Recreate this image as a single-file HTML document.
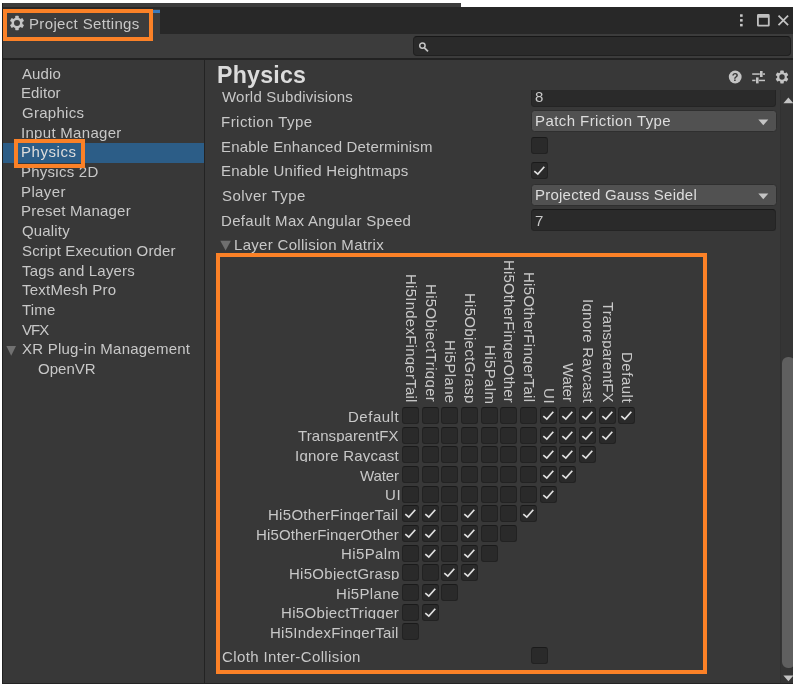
<!DOCTYPE html>
<html><head><meta charset="utf-8"><title>Project Settings</title><style>
html,body{margin:0;padding:0;background:#fff;}
html{overflow:hidden;}
body{width:793px;height:685px;position:relative;overflow:hidden;font-family:"Liberation Sans",sans-serif;}
.r{position:absolute;box-sizing:content-box;}
.t{position:absolute;white-space:nowrap;will-change:transform;}
.cb{position:absolute;background:#2a2a2a;border:1px solid #222;border-top-color:#1a1a1a;border-radius:3px;}
.clip{will-change:transform;position:absolute;white-space:nowrap;overflow:hidden;height:14px;line-height:16.6px;font-size:15.0px;letter-spacing:0.28px;color:#c8c8c8;}
svg{overflow:visible;}
</style></head><body>
<div class="r" style="left:2.00px;top:3.00px;width:791.00px;height:681.00px;background:#383838;"></div>
<div class="r" style="left:461.00px;top:3.00px;width:332.00px;height:4.00px;background:#ffffff;"></div>
<div class="r" style="left:3.00px;top:7.00px;width:790.00px;height:27.00px;background:#282828;"></div>
<div class="r" style="left:2.00px;top:3.00px;width:459.00px;height:4.40px;background:#3c3c3c;"></div>
<div class="r" style="left:3.00px;top:9.00px;width:156.50px;height:25.00px;background:#3c3c3c;"></div>
<div class="r" style="left:3.00px;top:10.00px;width:156.50px;height:2.60px;background:#3a79bb;"></div>
<div class="r" style="left:3.00px;top:34.00px;width:790.00px;height:24.20px;background:#3c3c3c;"></div>
<div class="r" style="left:3.00px;top:58.20px;width:790.00px;height:1.60px;background:#222222;"></div>
<div class="r" style="left:413.3px;top:36.3px;width:375.7px;height:17.4px;background:#2a2a2a;border:1px solid #202020;border-top-color:#171717;border-radius:4px"></div>
<svg class="r" style="left:418px;top:41px" width="12" height="12" viewBox="0 0 12 12"><circle cx="4.4" cy="4.6" r="2.7" fill="none" stroke="#c4c4c4" stroke-width="1.5"/><path d="M6.4 6.8 L10 10.4" stroke="#c4c4c4" stroke-width="1.7"/></svg>
<svg class="r" style="left:8.50px;top:14.50px" width="16" height="16" viewBox="-8 -8 16 16"><g fill="#c4c4c4"><rect x="-1.75" y="-7.2" width="3.5" height="14.4" rx="0.6" transform="rotate(0)"/><rect x="-1.75" y="-7.2" width="3.5" height="14.4" rx="0.6" transform="rotate(60)"/><rect x="-1.75" y="-7.2" width="3.5" height="14.4" rx="0.6" transform="rotate(120)"/><circle r="5.47"/></g><circle r="3.02" fill="#3c3c3c"/></svg>
<div class="t" style="left:28.77px;top:16.00px;font-size:15.0px;line-height:16.755px;color:#c8c8c8;letter-spacing:0.348px;">Project Settings</div>
<div class="r" style="left:3.20px;top:8.70px;width:142.10px;height:24.10px;border:4px solid #fb8127;"></div>
<svg class="r" style="left:739px;top:13px" width="5" height="15" viewBox="0 0 5 15"><g fill="#c8c8c8"><rect x="1.05" y="1.30" width="2.6" height="2.5"/><rect x="1.05" y="6.10" width="2.6" height="2.5"/><rect x="1.05" y="10.90" width="2.6" height="2.5"/></g></svg>
<svg class="r" style="left:757px;top:13.9px" width="13" height="13" viewBox="0 0 13 13"><path fill-rule="evenodd" fill="#c0c0c0" d="M1.4 0 H11.3 A1.4 1.4 0 0 1 12.7 1.4 V11.2 A1.4 1.4 0 0 1 11.3 12.6 H1.4 A1.4 1.4 0 0 1 0 11.2 V1.4 A1.4 1.4 0 0 1 1.4 0 Z M1.8 3.8 V10.8 H10.9 V3.8 Z"/></svg>
<svg class="r" style="left:777px;top:14px" width="13" height="13" viewBox="0 0 13 13"><path d="M1.5 1.6 L11.1 11.2 M11.1 1.6 L1.5 11.2" stroke="#c4c4c4" stroke-width="1.7"/></svg>
<div class="r" style="left:2.00px;top:3.00px;width:1.00px;height:681.00px;background:#202020;"></div>
<div class="r" style="left:2.00px;top:683.00px;width:791.00px;height:1.00px;background:#242424;"></div>
<div class="r" style="left:204.00px;top:59.80px;width:1.00px;height:623.20px;background:#232323;"></div>
<div class="r" style="left:3.00px;top:143.30px;width:201.00px;height:19.40px;background:#2c5d87;"></div>
<div class="t" style="left:22.47px;top:66.00px;font-size:15.0px;line-height:16.755px;color:#c8c8c8;letter-spacing:0.099px;">Audio</div>
<div class="t" style="left:21.27px;top:85.00px;font-size:15.0px;line-height:16.755px;color:#c8c8c8;letter-spacing:0.079px;">Editor</div>
<div class="t" style="left:21.75px;top:105.00px;font-size:15.0px;line-height:16.755px;color:#c8c8c8;letter-spacing:0.268px;">Graphics</div>
<div class="t" style="left:21.12px;top:125.00px;font-size:15.0px;line-height:16.755px;color:#c8c8c8;letter-spacing:0.3px;">Input Manager</div>
<div class="t" style="left:21.27px;top:144.00px;font-size:15.0px;line-height:16.755px;color:#dcdcdc;letter-spacing:0.565px;">Physics</div>
<div class="t" style="left:21.27px;top:164.00px;font-size:15.0px;line-height:16.755px;color:#c8c8c8;letter-spacing:0.247px;">Physics 2D</div>
<div class="t" style="left:21.27px;top:184.00px;font-size:15.0px;line-height:16.755px;color:#c8c8c8;letter-spacing:0.392px;">Player</div>
<div class="t" style="left:21.27px;top:203.00px;font-size:15.0px;line-height:16.755px;color:#c8c8c8;letter-spacing:0.228px;">Preset Manager</div>
<div class="t" style="left:21.79px;top:223.00px;font-size:15.0px;line-height:16.755px;color:#c8c8c8;letter-spacing:0.159px;">Quality</div>
<div class="t" style="left:21.82px;top:243.00px;font-size:15.0px;line-height:16.755px;color:#c8c8c8;letter-spacing:0.121px;">Script Execution Order</div>
<div class="t" style="left:22.16px;top:263.00px;font-size:15.0px;line-height:16.755px;color:#c8c8c8;letter-spacing:0.196px;">Tags and Layers</div>
<div class="t" style="left:22.16px;top:282.00px;font-size:15.0px;line-height:16.755px;color:#c8c8c8;letter-spacing:0.219px;">TextMesh Pro</div>
<div class="t" style="left:22.16px;top:302.00px;font-size:15.0px;line-height:16.755px;color:#c8c8c8;letter-spacing:0.157px;">Time</div>
<div class="t" style="left:22.43px;top:322.00px;font-size:15.0px;line-height:16.755px;color:#c8c8c8;letter-spacing:-0.946px;">VFX</div>
<div class="t" style="left:22.16px;top:341.00px;font-size:15.0px;line-height:16.755px;color:#c8c8c8;letter-spacing:0.226px;">XR Plug-in Management</div>
<div class="t" style="left:38.19px;top:361.00px;font-size:15.0px;line-height:16.755px;color:#c8c8c8;letter-spacing:0.015px;">OpenVR</div>
<svg class="r" style="left:6px;top:345px" width="11" height="12" viewBox="0 0 11 12"><path d="M0.4 1 L10 1 L5.2 10.8 Z" fill="#717171"/></svg>
<div class="r" style="left:14.30px;top:138.50px;width:63.20px;height:21.10px;border:4px solid #fb8127;"></div>
<div class="t" style="left:222.23px;top:89.00px;font-size:15.0px;line-height:16.755px;color:#c8c8c8;letter-spacing:0.209px;">World Subdivisions</div>
<div class="t" style="left:221.07px;top:114.00px;font-size:15.0px;line-height:16.755px;color:#c8c8c8;letter-spacing:0.467px;">Friction Type</div>
<div class="t" style="left:221.07px;top:139.00px;font-size:15.0px;line-height:16.755px;color:#c8c8c8;letter-spacing:0.182px;">Enable Enhanced Determinism</div>
<div class="t" style="left:221.07px;top:163.00px;font-size:15.0px;line-height:16.755px;color:#c8c8c8;letter-spacing:0.233px;">Enable Unified Heightmaps</div>
<div class="t" style="left:221.62px;top:188.00px;font-size:15.0px;line-height:16.755px;color:#c8c8c8;letter-spacing:0.452px;">Solver Type</div>
<div class="t" style="left:221.07px;top:213.00px;font-size:15.0px;line-height:16.755px;color:#c8c8c8;letter-spacing:0.302px;">Default Max Angular Speed</div>
<div class="r" style="left:531px;top:85px;width:243.2px;height:20.00px;background:#2a2a2a;border:1px solid #242424;border-top-color:#191919;border-radius:3.5px"></div>
<div class="t" style="left:534.75px;top:89.00px;font-size:15.0px;line-height:16.755px;color:#c8c8c8;letter-spacing:0px;">8</div>
<div class="r" style="left:531px;top:110px;width:243.6px;height:20.20px;background:#515151;border:1px solid #2f2f2f;border-radius:3.5px"></div>
<div class="t" style="left:534.77px;top:113.00px;font-size:15.0px;line-height:16.755px;color:#dddddd;letter-spacing:0.421px;">Patch Friction Type</div>
<svg class="r" style="left:757.8px;top:118.50px" width="11" height="7" viewBox="0 0 11 7"><path d="M0.3 0.4 L10.3 0.4 L5.3 6.2 Z" fill="#c4c4c4"/></svg>
<div class="cb" style="left:531.00px;top:137.20px;width:15px;height:15px"></div>
<div class="cb" style="left:531.00px;top:161.60px;width:15px;height:15px"></div>
<svg class="r" style="left:531.00px;top:161.60px" width="17" height="17" viewBox="0 0 17 17"><path d="M3.3 9.2 L6.8 12.1 L13.3 4.7" fill="none" stroke="#e0e0e0" stroke-width="1.7"/></svg>
<div class="r" style="left:531px;top:184px;width:243.6px;height:20.20px;background:#515151;border:1px solid #2f2f2f;border-radius:3.5px"></div>
<div class="t" style="left:534.77px;top:187.00px;font-size:15.0px;line-height:16.755px;color:#dddddd;letter-spacing:0.237px;">Projected Gauss Seidel</div>
<svg class="r" style="left:757.8px;top:192.50px" width="11" height="7" viewBox="0 0 11 7"><path d="M0.3 0.4 L10.3 0.4 L5.3 6.2 Z" fill="#c4c4c4"/></svg>
<div class="r" style="left:531px;top:209px;width:243.2px;height:20.00px;background:#2a2a2a;border:1px solid #242424;border-top-color:#191919;border-radius:3.5px"></div>
<div class="t" style="left:534.63px;top:213.00px;font-size:15.0px;line-height:16.755px;color:#c8c8c8;letter-spacing:0px;">7</div>
<div class="r" style="left:205.00px;top:59.80px;width:588.00px;height:30.50px;background:#383838;"></div>
<div class="t" style="left:216.75px;top:63.20px;font-size:23.2px;line-height:25.914px;color:#dcdcdc;letter-spacing:0.217px;font-weight:bold;">Physics</div>
<svg class="r" style="will-change:transform;left:728px;top:69.7px" width="14" height="14" viewBox="0 0 14 14"><circle cx="7.2" cy="7" r="6.4" fill="#c4c4c4"/><text x="7.2" y="10.6" font-family="Liberation Sans, sans-serif" font-weight="bold" font-size="11" text-anchor="middle" fill="#383838">?</text></svg>
<svg class="r" style="left:751px;top:69.7px" width="15" height="14" viewBox="0 0 15 14"><g fill="#c4c4c4"><rect x="1.2" y="3.3" width="7.6" height="1.5"/><rect x="11.8" y="3.3" width="2.2" height="1.5"/><rect x="9" y="1" width="2.6" height="6"/><rect x="1.2" y="9.7" width="3.3" height="1.5"/><rect x="8" y="9.7" width="6" height="1.5"/><rect x="5" y="7.4" width="2.6" height="6"/></g></svg>
<svg class="r" style="left:774.00px;top:68.70px" width="16" height="16" viewBox="-8 -8 16 16"><g fill="#c4c4c4"><rect x="-1.75" y="-6.4" width="3.5" height="12.8" rx="0.6" transform="rotate(0)"/><rect x="-1.75" y="-6.4" width="3.5" height="12.8" rx="0.6" transform="rotate(60)"/><rect x="-1.75" y="-6.4" width="3.5" height="12.8" rx="0.6" transform="rotate(120)"/><circle r="4.86"/></g><circle r="2.69" fill="#383838"/></svg>
<svg class="r" style="left:219.5px;top:240px" width="12" height="12" viewBox="0 0 12 12"><path d="M0.3 0.8 L10.9 0.8 L5.6 10.6 Z" fill="#6f6f6f"/></svg>
<div class="t" style="left:233.97px;top:237.00px;font-size:15.0px;line-height:16.755px;color:#c8c8c8;letter-spacing:0.301px;">Layer Collision Matrix</div>
<div class="clip" style="left:348.37px;top:409px;letter-spacing:0.519px;">Default</div>
<div class="cb" style="left:402.00px;top:407.00px;width:15px;height:15px"></div>
<div class="cb" style="left:421.67px;top:407.00px;width:15px;height:15px"></div>
<div class="cb" style="left:441.34px;top:407.00px;width:15px;height:15px"></div>
<div class="cb" style="left:461.01px;top:407.00px;width:15px;height:15px"></div>
<div class="cb" style="left:480.68px;top:407.00px;width:15px;height:15px"></div>
<div class="cb" style="left:500.35px;top:407.00px;width:15px;height:15px"></div>
<div class="cb" style="left:520.02px;top:407.00px;width:15px;height:15px"></div>
<div class="cb" style="left:539.69px;top:407.00px;width:15px;height:15px"></div>
<svg class="r" style="left:539.69px;top:407.00px" width="17" height="17" viewBox="0 0 17 17"><path d="M3.3 9.2 L6.8 12.1 L13.3 4.7" fill="none" stroke="#e0e0e0" stroke-width="1.7"/></svg>
<div class="cb" style="left:559.36px;top:407.00px;width:15px;height:15px"></div>
<svg class="r" style="left:559.36px;top:407.00px" width="17" height="17" viewBox="0 0 17 17"><path d="M3.3 9.2 L6.8 12.1 L13.3 4.7" fill="none" stroke="#e0e0e0" stroke-width="1.7"/></svg>
<div class="cb" style="left:579.03px;top:407.00px;width:15px;height:15px"></div>
<svg class="r" style="left:579.03px;top:407.00px" width="17" height="17" viewBox="0 0 17 17"><path d="M3.3 9.2 L6.8 12.1 L13.3 4.7" fill="none" stroke="#e0e0e0" stroke-width="1.7"/></svg>
<div class="cb" style="left:598.70px;top:407.00px;width:15px;height:15px"></div>
<svg class="r" style="left:598.70px;top:407.00px" width="17" height="17" viewBox="0 0 17 17"><path d="M3.3 9.2 L6.8 12.1 L13.3 4.7" fill="none" stroke="#e0e0e0" stroke-width="1.7"/></svg>
<div class="cb" style="left:618.37px;top:407.00px;width:15px;height:15px"></div>
<svg class="r" style="left:618.37px;top:407.00px" width="17" height="17" viewBox="0 0 17 17"><path d="M3.3 9.2 L6.8 12.1 L13.3 4.7" fill="none" stroke="#e0e0e0" stroke-width="1.7"/></svg>
<div class="clip" style="left:298.26px;top:428px;letter-spacing:0.076px;">TransparentFX</div>
<div class="cb" style="left:402.00px;top:426.67px;width:15px;height:15px"></div>
<div class="cb" style="left:421.67px;top:426.67px;width:15px;height:15px"></div>
<div class="cb" style="left:441.34px;top:426.67px;width:15px;height:15px"></div>
<div class="cb" style="left:461.01px;top:426.67px;width:15px;height:15px"></div>
<div class="cb" style="left:480.68px;top:426.67px;width:15px;height:15px"></div>
<div class="cb" style="left:500.35px;top:426.67px;width:15px;height:15px"></div>
<div class="cb" style="left:520.02px;top:426.67px;width:15px;height:15px"></div>
<div class="cb" style="left:539.69px;top:426.67px;width:15px;height:15px"></div>
<svg class="r" style="left:539.69px;top:426.67px" width="17" height="17" viewBox="0 0 17 17"><path d="M3.3 9.2 L6.8 12.1 L13.3 4.7" fill="none" stroke="#e0e0e0" stroke-width="1.7"/></svg>
<div class="cb" style="left:559.36px;top:426.67px;width:15px;height:15px"></div>
<svg class="r" style="left:559.36px;top:426.67px" width="17" height="17" viewBox="0 0 17 17"><path d="M3.3 9.2 L6.8 12.1 L13.3 4.7" fill="none" stroke="#e0e0e0" stroke-width="1.7"/></svg>
<div class="cb" style="left:579.03px;top:426.67px;width:15px;height:15px"></div>
<svg class="r" style="left:579.03px;top:426.67px" width="17" height="17" viewBox="0 0 17 17"><path d="M3.3 9.2 L6.8 12.1 L13.3 4.7" fill="none" stroke="#e0e0e0" stroke-width="1.7"/></svg>
<div class="cb" style="left:598.70px;top:426.67px;width:15px;height:15px"></div>
<svg class="r" style="left:598.70px;top:426.67px" width="17" height="17" viewBox="0 0 17 17"><path d="M3.3 9.2 L6.8 12.1 L13.3 4.7" fill="none" stroke="#e0e0e0" stroke-width="1.7"/></svg>
<div class="clip" style="left:295.32px;top:448px;letter-spacing:0.216px;">Ignore Raycast</div>
<div class="cb" style="left:402.00px;top:446.34px;width:15px;height:15px"></div>
<div class="cb" style="left:421.67px;top:446.34px;width:15px;height:15px"></div>
<div class="cb" style="left:441.34px;top:446.34px;width:15px;height:15px"></div>
<div class="cb" style="left:461.01px;top:446.34px;width:15px;height:15px"></div>
<div class="cb" style="left:480.68px;top:446.34px;width:15px;height:15px"></div>
<div class="cb" style="left:500.35px;top:446.34px;width:15px;height:15px"></div>
<div class="cb" style="left:520.02px;top:446.34px;width:15px;height:15px"></div>
<div class="cb" style="left:539.69px;top:446.34px;width:15px;height:15px"></div>
<svg class="r" style="left:539.69px;top:446.34px" width="17" height="17" viewBox="0 0 17 17"><path d="M3.3 9.2 L6.8 12.1 L13.3 4.7" fill="none" stroke="#e0e0e0" stroke-width="1.7"/></svg>
<div class="cb" style="left:559.36px;top:446.34px;width:15px;height:15px"></div>
<svg class="r" style="left:559.36px;top:446.34px" width="17" height="17" viewBox="0 0 17 17"><path d="M3.3 9.2 L6.8 12.1 L13.3 4.7" fill="none" stroke="#e0e0e0" stroke-width="1.7"/></svg>
<div class="cb" style="left:579.03px;top:446.34px;width:15px;height:15px"></div>
<svg class="r" style="left:579.03px;top:446.34px" width="17" height="17" viewBox="0 0 17 17"><path d="M3.3 9.2 L6.8 12.1 L13.3 4.7" fill="none" stroke="#e0e0e0" stroke-width="1.7"/></svg>
<div class="clip" style="left:359.53px;top:468px;letter-spacing:-0.097px;">Water</div>
<div class="cb" style="left:402.00px;top:466.01px;width:15px;height:15px"></div>
<div class="cb" style="left:421.67px;top:466.01px;width:15px;height:15px"></div>
<div class="cb" style="left:441.34px;top:466.01px;width:15px;height:15px"></div>
<div class="cb" style="left:461.01px;top:466.01px;width:15px;height:15px"></div>
<div class="cb" style="left:480.68px;top:466.01px;width:15px;height:15px"></div>
<div class="cb" style="left:500.35px;top:466.01px;width:15px;height:15px"></div>
<div class="cb" style="left:520.02px;top:466.01px;width:15px;height:15px"></div>
<div class="cb" style="left:539.69px;top:466.01px;width:15px;height:15px"></div>
<svg class="r" style="left:539.69px;top:466.01px" width="17" height="17" viewBox="0 0 17 17"><path d="M3.3 9.2 L6.8 12.1 L13.3 4.7" fill="none" stroke="#e0e0e0" stroke-width="1.7"/></svg>
<div class="cb" style="left:559.36px;top:466.01px;width:15px;height:15px"></div>
<svg class="r" style="left:559.36px;top:466.01px" width="17" height="17" viewBox="0 0 17 17"><path d="M3.3 9.2 L6.8 12.1 L13.3 4.7" fill="none" stroke="#e0e0e0" stroke-width="1.7"/></svg>
<div class="clip" style="left:384.54px;top:487px;letter-spacing:0.742px;">UI</div>
<div class="cb" style="left:402.00px;top:485.68px;width:15px;height:15px"></div>
<div class="cb" style="left:421.67px;top:485.68px;width:15px;height:15px"></div>
<div class="cb" style="left:441.34px;top:485.68px;width:15px;height:15px"></div>
<div class="cb" style="left:461.01px;top:485.68px;width:15px;height:15px"></div>
<div class="cb" style="left:480.68px;top:485.68px;width:15px;height:15px"></div>
<div class="cb" style="left:500.35px;top:485.68px;width:15px;height:15px"></div>
<div class="cb" style="left:520.02px;top:485.68px;width:15px;height:15px"></div>
<div class="cb" style="left:539.69px;top:485.68px;width:15px;height:15px"></div>
<svg class="r" style="left:539.69px;top:485.68px" width="17" height="17" viewBox="0 0 17 17"><path d="M3.3 9.2 L6.8 12.1 L13.3 4.7" fill="none" stroke="#e0e0e0" stroke-width="1.7"/></svg>
<div class="clip" style="left:268.27px;top:507px;letter-spacing:0.290px;">Hi5OtherFingerTail</div>
<div class="cb" style="left:402.00px;top:505.35px;width:15px;height:15px"></div>
<svg class="r" style="left:402.00px;top:505.35px" width="17" height="17" viewBox="0 0 17 17"><path d="M3.3 9.2 L6.8 12.1 L13.3 4.7" fill="none" stroke="#e0e0e0" stroke-width="1.7"/></svg>
<div class="cb" style="left:421.67px;top:505.35px;width:15px;height:15px"></div>
<svg class="r" style="left:421.67px;top:505.35px" width="17" height="17" viewBox="0 0 17 17"><path d="M3.3 9.2 L6.8 12.1 L13.3 4.7" fill="none" stroke="#e0e0e0" stroke-width="1.7"/></svg>
<div class="cb" style="left:441.34px;top:505.35px;width:15px;height:15px"></div>
<div class="cb" style="left:461.01px;top:505.35px;width:15px;height:15px"></div>
<svg class="r" style="left:461.01px;top:505.35px" width="17" height="17" viewBox="0 0 17 17"><path d="M3.3 9.2 L6.8 12.1 L13.3 4.7" fill="none" stroke="#e0e0e0" stroke-width="1.7"/></svg>
<div class="cb" style="left:480.68px;top:505.35px;width:15px;height:15px"></div>
<div class="cb" style="left:500.35px;top:505.35px;width:15px;height:15px"></div>
<div class="cb" style="left:520.02px;top:505.35px;width:15px;height:15px"></div>
<svg class="r" style="left:520.02px;top:505.35px" width="17" height="17" viewBox="0 0 17 17"><path d="M3.3 9.2 L6.8 12.1 L13.3 4.7" fill="none" stroke="#e0e0e0" stroke-width="1.7"/></svg>
<div class="clip" style="left:256.47px;top:527px;letter-spacing:0.146px;">Hi5OtherFingerOther</div>
<div class="cb" style="left:402.00px;top:525.02px;width:15px;height:15px"></div>
<svg class="r" style="left:402.00px;top:525.02px" width="17" height="17" viewBox="0 0 17 17"><path d="M3.3 9.2 L6.8 12.1 L13.3 4.7" fill="none" stroke="#e0e0e0" stroke-width="1.7"/></svg>
<div class="cb" style="left:421.67px;top:525.02px;width:15px;height:15px"></div>
<svg class="r" style="left:421.67px;top:525.02px" width="17" height="17" viewBox="0 0 17 17"><path d="M3.3 9.2 L6.8 12.1 L13.3 4.7" fill="none" stroke="#e0e0e0" stroke-width="1.7"/></svg>
<div class="cb" style="left:441.34px;top:525.02px;width:15px;height:15px"></div>
<div class="cb" style="left:461.01px;top:525.02px;width:15px;height:15px"></div>
<svg class="r" style="left:461.01px;top:525.02px" width="17" height="17" viewBox="0 0 17 17"><path d="M3.3 9.2 L6.8 12.1 L13.3 4.7" fill="none" stroke="#e0e0e0" stroke-width="1.7"/></svg>
<div class="cb" style="left:480.68px;top:525.02px;width:15px;height:15px"></div>
<div class="cb" style="left:500.35px;top:525.02px;width:15px;height:15px"></div>
<div class="clip" style="left:340.87px;top:546px;letter-spacing:0.390px;">Hi5Palm</div>
<div class="cb" style="left:402.00px;top:544.69px;width:15px;height:15px"></div>
<div class="cb" style="left:421.67px;top:544.69px;width:15px;height:15px"></div>
<svg class="r" style="left:421.67px;top:544.69px" width="17" height="17" viewBox="0 0 17 17"><path d="M3.3 9.2 L6.8 12.1 L13.3 4.7" fill="none" stroke="#e0e0e0" stroke-width="1.7"/></svg>
<div class="cb" style="left:441.34px;top:544.69px;width:15px;height:15px"></div>
<div class="cb" style="left:461.01px;top:544.69px;width:15px;height:15px"></div>
<svg class="r" style="left:461.01px;top:544.69px" width="17" height="17" viewBox="0 0 17 17"><path d="M3.3 9.2 L6.8 12.1 L13.3 4.7" fill="none" stroke="#e0e0e0" stroke-width="1.7"/></svg>
<div class="cb" style="left:480.68px;top:544.69px;width:15px;height:15px"></div>
<div class="clip" style="left:289.17px;top:566px;letter-spacing:0.281px;">Hi5ObjectGrasp</div>
<div class="cb" style="left:402.00px;top:564.36px;width:15px;height:15px"></div>
<div class="cb" style="left:421.67px;top:564.36px;width:15px;height:15px"></div>
<div class="cb" style="left:441.34px;top:564.36px;width:15px;height:15px"></div>
<svg class="r" style="left:441.34px;top:564.36px" width="17" height="17" viewBox="0 0 17 17"><path d="M3.3 9.2 L6.8 12.1 L13.3 4.7" fill="none" stroke="#e0e0e0" stroke-width="1.7"/></svg>
<div class="cb" style="left:461.01px;top:564.36px;width:15px;height:15px"></div>
<svg class="r" style="left:461.01px;top:564.36px" width="17" height="17" viewBox="0 0 17 17"><path d="M3.3 9.2 L6.8 12.1 L13.3 4.7" fill="none" stroke="#e0e0e0" stroke-width="1.7"/></svg>
<div class="clip" style="left:336.37px;top:586px;letter-spacing:0.332px;">Hi5Plane</div>
<div class="cb" style="left:402.00px;top:584.03px;width:15px;height:15px"></div>
<div class="cb" style="left:421.67px;top:584.03px;width:15px;height:15px"></div>
<svg class="r" style="left:421.67px;top:584.03px" width="17" height="17" viewBox="0 0 17 17"><path d="M3.3 9.2 L6.8 12.1 L13.3 4.7" fill="none" stroke="#e0e0e0" stroke-width="1.7"/></svg>
<div class="cb" style="left:441.34px;top:584.03px;width:15px;height:15px"></div>
<div class="clip" style="left:280.77px;top:605px;letter-spacing:0.334px;">Hi5ObjectTrigger</div>
<div class="cb" style="left:402.00px;top:603.70px;width:15px;height:15px"></div>
<div class="cb" style="left:421.67px;top:603.70px;width:15px;height:15px"></div>
<svg class="r" style="left:421.67px;top:603.70px" width="17" height="17" viewBox="0 0 17 17"><path d="M3.3 9.2 L6.8 12.1 L13.3 4.7" fill="none" stroke="#e0e0e0" stroke-width="1.7"/></svg>
<div class="clip" style="left:269.87px;top:625px;letter-spacing:0.244px;">Hi5IndexFingerTail</div>
<div class="cb" style="left:402.00px;top:623.37px;width:15px;height:15px"></div>
<div class="clip" style="left:419px;top:273.57px;letter-spacing:0.244px;transform-origin:0 0;transform:rotate(90deg)">Hi5IndexFingerTail</div>
<div class="clip" style="left:439px;top:284.47px;letter-spacing:0.334px;transform-origin:0 0;transform:rotate(90deg)">Hi5ObjectTrigger</div>
<div class="clip" style="left:458px;top:340.07px;letter-spacing:0.332px;transform-origin:0 0;transform:rotate(90deg)">Hi5Plane</div>
<div class="clip" style="left:478px;top:292.87px;letter-spacing:0.281px;transform-origin:0 0;transform:rotate(90deg)">Hi5ObjectGrasp</div>
<div class="clip" style="left:498px;top:344.57px;letter-spacing:0.390px;transform-origin:0 0;transform:rotate(90deg)">Hi5Palm</div>
<div class="clip" style="left:517px;top:260.17px;letter-spacing:0.146px;transform-origin:0 0;transform:rotate(90deg)">Hi5OtherFingerOther</div>
<div class="clip" style="left:537px;top:271.97px;letter-spacing:0.290px;transform-origin:0 0;transform:rotate(90deg)">Hi5OtherFingerTail</div>
<div class="clip" style="left:557px;top:388.24px;letter-spacing:0.742px;transform-origin:0 0;transform:rotate(90deg)">UI</div>
<div class="clip" style="left:576px;top:363.23px;letter-spacing:-0.097px;transform-origin:0 0;transform:rotate(90deg)">Water</div>
<div class="clip" style="left:596px;top:299.02px;letter-spacing:0.216px;transform-origin:0 0;transform:rotate(90deg)">Ignore Raycast</div>
<div class="clip" style="left:616px;top:301.96px;letter-spacing:0.076px;transform-origin:0 0;transform:rotate(90deg)">TransparentFX</div>
<div class="clip" style="left:635px;top:352.07px;letter-spacing:0.519px;transform-origin:0 0;transform:rotate(90deg)">Default</div>
<div class="t" style="left:221.84px;top:649.00px;font-size:15.0px;line-height:16.755px;color:#c8c8c8;letter-spacing:0.378px;">Cloth Inter-Collision</div>
<div class="cb" style="left:531.00px;top:646.80px;width:15px;height:15px"></div>
<div class="r" style="left:215.50px;top:253.00px;width:483.80px;height:412.60px;border:4px solid #fb8127;"></div>
<div class="r" style="left:779.60px;top:90.30px;width:13.40px;height:592.70px;background:#353535;"></div>
<div class="r" style="left:779.60px;top:90.30px;width:1.20px;height:592.70px;background:#313131;"></div>
<div class="r" style="left:782px;top:357.2px;width:13px;height:310.5px;background:#5f5f5f;border-radius:6px"></div>
<svg class="r" style="left:783px;top:97px" width="10" height="7" viewBox="0 0 10 7"><path d="M0.4 6.2 L5.4 0.6 L10.4 6.2 Z" fill="#c4c4c4"/></svg>
<svg class="r" style="left:783px;top:674.6px" width="10" height="7" viewBox="0 0 10 7"><path d="M0.4 0.6 L10.4 0.6 L5.4 6.2 Z" fill="#c4c4c4"/></svg>
</body></html>
